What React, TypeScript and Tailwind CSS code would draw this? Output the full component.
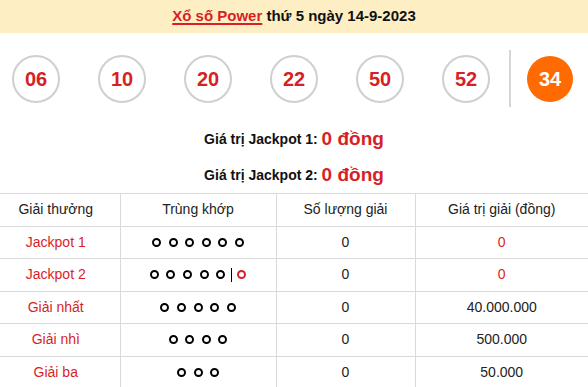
import React from 'react';

interface Prize {
    name: string;
    match: number;
    extra?: boolean;
    count: string;
    value: string;
    redValue?: boolean;
}

const balls: string[] = ['06', '10', '20', '22', '50', '52'];

const prizes: Prize[] = [
    { name: 'Jackpot 1', match: 6, count: '0', value: '0', redValue: true },
    { name: 'Jackpot 2', match: 5, extra: true, count: '0', value: '0', redValue: true },
    { name: 'Giải nhất', match: 5, count: '0', value: '40.000.000' },
    { name: 'Giải nhì', match: 4, count: '0', value: '500.000' },
    { name: 'Giải ba', match: 3, count: '0', value: '50.000' },
];

const Dots: React.FC<{ n: number; extra?: boolean }> = ({ n, extra }) => (
    <div className="flex items-center justify-center gap-[7.6px]">
        {Array.from({ length: n }).map((_, i) => (
            <span key={i} className="inline-block w-[9px] h-[9px] rounded-full border-[2.2px] border-black" />
        ))}
        {extra && (
            <>
                <span className="inline-block w-[1px] h-[14px] bg-black -mx-[2px]" />
                <span className="inline-block w-[9px] h-[9px] rounded-full border-[2.2px] border-[#d81f26]" />
            </>
        )}
    </div>
);

export default function App() {
    return (
        <div className="w-[588px] h-[387px] overflow-hidden bg-white font-['Liberation_Sans',Arial,sans-serif]">
            {/* tiêu đề */}
            <div className="h-[33px] bg-[#fdefc3] flex items-center justify-center text-[15px] font-bold text-[#111]">
                <a className="text-[#d81f26] underline underline-offset-2 decoration-2">Xổ số Power</a>
                <span>&nbsp;thứ 5 ngày 14-9-2023</span>
            </div>

            {/* bóng số */}
            <div className="flex items-center h-[57px] mt-[17px] pl-[12px]">
                {balls.map((b, i) => (
                    <div
                        key={b}
                        className={
                            'w-[48px] h-[48px] rounded-full border-2 border-[#cfcfcf] flex items-center justify-center text-[20px] font-bold text-[#d81f26] ' +
                            (i > 0 ? 'ml-[38px]' : '')
                        }
                    >
                        {b}
                    </div>
                ))}
                <div className="ml-[19px] w-[2px] h-[57px] bg-[#d6d6d6]" />
                <div className="ml-[16px] w-[46px] h-[46px] rounded-full bg-[#ff6b00] flex items-center justify-center text-[20px] font-bold text-white">
                    34
                </div>
            </div>

            {/* giá trị jackpot */}
            <div className="mt-[14px]">
                <div className="h-[36px] flex items-center justify-center">
                    <span className="text-[14px] font-bold text-[#111]">Giá trị Jackpot 1:&nbsp;</span>
                    <span className="text-[19px] font-bold text-[#d81f26]">0 đồng</span>
                </div>
                <div className="h-[36px] flex items-center justify-center">
                    <span className="text-[14px] font-bold text-[#111]">Giá trị Jackpot 2:&nbsp;</span>
                    <span className="text-[19px] font-bold text-[#d81f26]">0 đồng</span>
                </div>
            </div>

            {/* bảng giải */}
            <table className="w-full table-fixed border-collapse text-[14px] text-[#222]">
                <colgroup>
                    <col className="w-[120px]" />
                    <col className="w-[156px]" />
                    <col className="w-[139px]" />
                    <col />
                </colgroup>
                <thead>
                    <tr className="h-[32.5px] border-y border-[#dadada]">
                        <th className="font-normal text-center pr-[8px]">Giải thưởng</th>
                        <th className="font-normal text-center border-l border-[#dadada]">Trùng khớp</th>
                        <th className="font-normal text-center border-l border-[#dadada]">Số lượng giải</th>
                        <th className="font-normal text-center border-l border-[#dadada]">Giá trị giải (đồng)</th>
                    </tr>
                </thead>
                <tbody>
                    {prizes.map((p) => (
                        <tr key={p.name} className="h-[32.5px] border-b border-[#dadada]">
                            <td className="text-center pr-[8px] text-[#d81f26]">{p.name}</td>
                            <td className="border-l border-[#dadada]">
                                <Dots n={p.match} extra={p.extra} />
                            </td>
                            <td className="text-center border-l border-[#dadada]">{p.count}</td>
                            <td className={'text-center border-l border-[#dadada] ' + (p.redValue ? 'text-[#d81f26]' : '')}>
                                {p.value}
                            </td>
                        </tr>
                    ))}
                </tbody>
            </table>
        </div>
    );
}
